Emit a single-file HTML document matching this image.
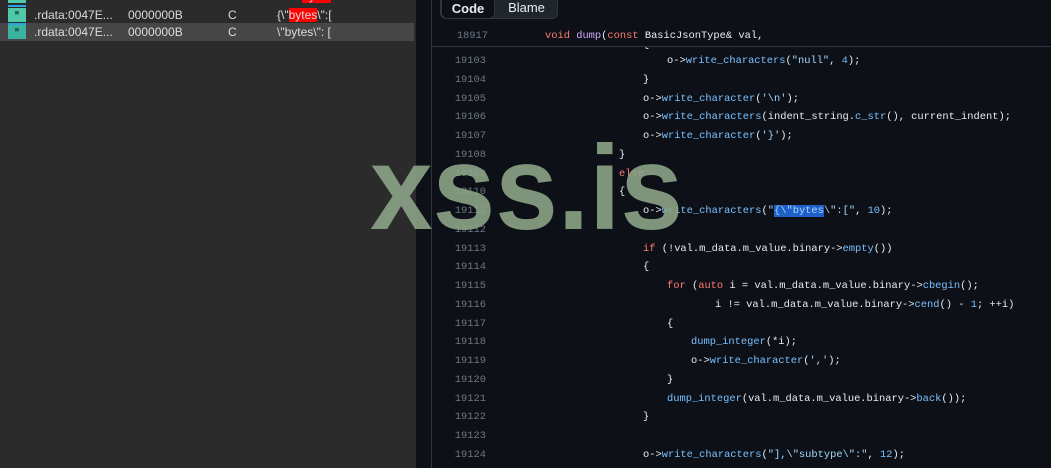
<!DOCTYPE html>
<html><head><meta charset="utf-8"><style>
*{margin:0;padding:0;box-sizing:border-box}
body{width:1051px;height:468px;overflow:hidden;background:#0d1117;position:relative;font-family:"Liberation Sans",sans-serif}
#left{position:absolute;left:0;top:0;width:416px;height:468px;background:#2b2b2b}
.row{position:absolute;left:0;width:414px;height:18px;color:#dcdcdc;font-size:12px;line-height:18px}
.row span{position:absolute}
.ic{left:8px;top:2px;width:18px;height:14px;background:#4fc9a8;color:#1a5a4a;font-size:9px;line-height:14px;text-align:center;font-weight:bold}
#strip{position:absolute;left:416px;top:0;width:16px;height:468px;background:#0d1117}
#vl{position:absolute;left:431px;top:0;width:1px;height:468px;background:#30363d}
.tabs{position:absolute;left:440px;top:-6px;width:118px;height:25px;border:1px solid #30363d;border-radius:6px;background:#21262d}
.tab{position:absolute;top:0;height:24px;line-height:26px;font-size:13px;color:#e6edf3;text-align:center}
#hdr{position:absolute;left:432px;top:27px;width:619px;height:20px;border-bottom:1px solid #30363d}
.c{position:absolute;font-family:"Liberation Mono",monospace;font-size:10.4px;color:#e6edf3;white-space:pre;line-height:18.76px}
.n{position:absolute;font-family:"Liberation Mono",monospace;font-size:10.4px;color:#6e7681;width:40px;text-align:right;left:446px;line-height:18.76px}
.k{color:#ff7b72}.f{color:#79c0ff}.p{color:#d2a8ff}.s{color:#a5d6ff}.sel{background:#1f5fc8}
</style></head><body>
<div id="left">
<div class="row" style="top:-13px"><span class="ic">❞</span><span style="left:34px">.rdata:0047E...</span><span style="left:128px">0000000B</span><span style="left:228px">C</span><span style="left:277px">unsi <span style="position:static;background:#f00">bytes</span></span></div>
<div style="position:absolute;left:8px;top:5px;width:18px;height:2px;background:#29a3e0"></div>
<div class="row" style="top:6px"><span class="ic">❞</span><span style="left:34px">.rdata:0047E...</span><span style="left:128px">0000000B</span><span style="left:228px">C</span><span style="left:277px">{\"<span style="position:static;background:#f00">bytes</span>\":[</span></div>
<div class="row" style="top:23px;background:#464646"><span class="ic" style="background:#3cb3a0">❞</span><span style="left:34px">.rdata:0047E...</span><span style="left:128px">0000000B</span><span style="left:228px">C</span><span style="left:277px">\"bytes\": [</span></div>
<div style="position:absolute;left:8px;top:23px;width:18px;height:2px;background:#29a3e0"></div>
</div>
<div id="strip"></div><div id="vl"></div>
<div class="tabs"><div class="tab" style="left:0;width:54px;background:#0d1117;border:1px solid #30363d;border-radius:6px;font-weight:bold">Code</div><div class="tab" style="left:54px;width:63px">Blame</div></div>
<div id="hdr"></div>
<div class="n" style="top:27px;left:448px">18917</div>
<div class="c" style="top:27px;left:545px"><span class="k">void</span> <span class="p">dump</span>(<span class="k">const</span> BasicJsonType&amp; val,</div>
<div class="c" style="top:36px;left:643px;clip-path:inset(11px 0 0 0)">{</div>
<div id="code"></div>
<svg style="position:absolute;left:0;top:0" width="1051" height="468"><text x="370" y="229" font-family="Liberation Sans" font-weight="bold" font-size="120" textLength="313" lengthAdjust="spacingAndGlyphs" fill="#8ea78a" fill-opacity="0.88">xss.is</text></svg>
<script>
var L=[[19103,667,'o->'+'<span class="f">write_characters</span>(<span class="s">"null"</span>, <span class="f">4</span>);'],
[19104,643,'}'],
[19105,643,'o-><span class="f">write_character</span>(<span class="s">\'\\n\'</span>);'],
[19106,643,'o-><span class="f">write_characters</span>(indent_string.<span class="f">c_str</span>(), current_indent);'],
[19107,643,'o-><span class="f">write_character</span>(<span class="s">\'}\'</span>);'],
[19108,619,'}'],
[19109,619,'<span class="k">else</span>'],
[19110,619,'{'],
[19111,643,'o-><span class="f">write_characters</span>(<span class="s">"<span class="sel">{\\"bytes</span>\\":["</span>, <span class="f">10</span>);'],
[19112,0,''],
[19113,643,'<span class="k">if</span> (!val.m_data.m_value.binary-><span class="f">empty</span>())'],
[19114,643,'{'],
[19115,667,'<span class="k">for</span> (<span class="k">auto</span> i = val.m_data.m_value.binary-><span class="f">cbegin</span>();'],
[19116,715,'i != val.m_data.m_value.binary-><span class="f">cend</span>() - <span class="f">1</span>; ++i)'],
[19117,667,'{'],
[19118,691,'<span class="f">dump_integer</span>(*i);'],
[19119,691,'o-><span class="f">write_character</span>(<span class="s">\',\'</span>);'],
[19120,667,'}'],
[19121,667,'<span class="f">dump_integer</span>(val.m_data.m_value.binary-><span class="f">back</span>());'],
[19122,643,'}'],
[19123,0,''],
[19124,643,'o-><span class="f">write_characters</span>(<span class="s">"],\\"subtype\\":"</span>, <span class="f">12</span>);']];
var h='';L.forEach(function(l,i){var t=(52+i*18.76).toFixed(2);h+='<div class="n" style="top:'+t+'px">'+l[0]+'</div>';if(l[1])h+='<div class="c" style="top:'+t+'px;left:'+l[1]+'px">'+l[2]+'</div>';});
document.getElementById('code').innerHTML=h;
</script>
</body></html>
